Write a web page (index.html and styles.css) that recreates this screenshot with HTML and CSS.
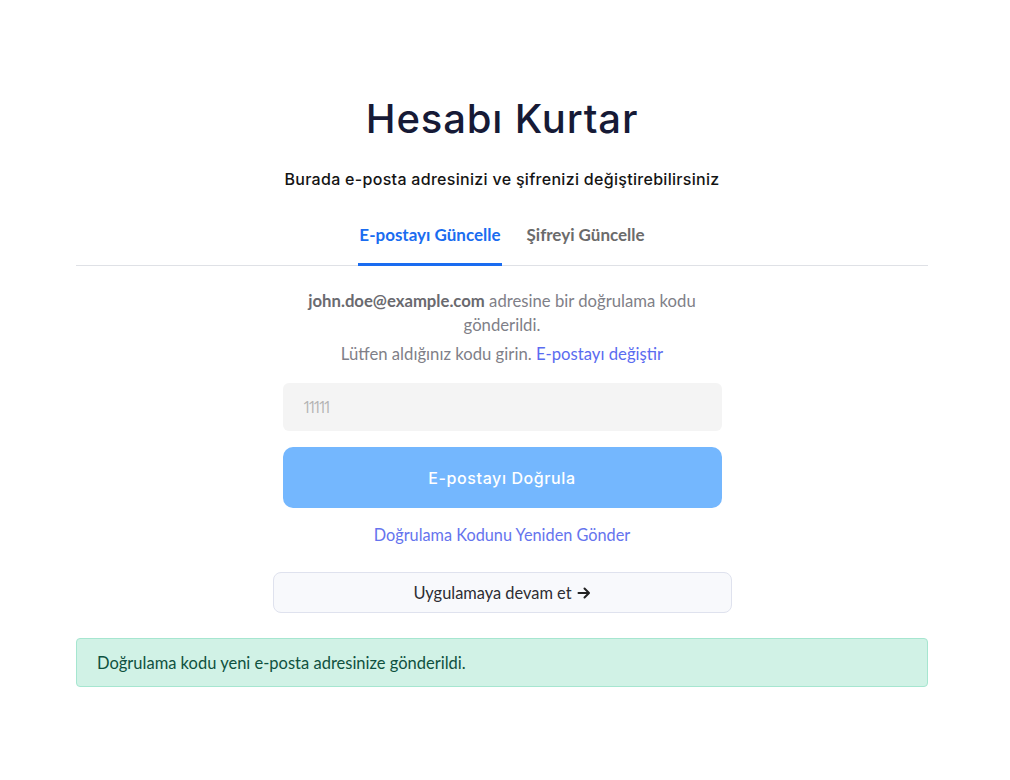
FILE: index.html
```html
<!DOCTYPE html>
<html lang="tr">
<head>
<meta charset="utf-8">
<title>Hesabı Kurtar</title>
<link rel="stylesheet" href="styles.css">
</head>
<body>
<main class="page">
  <h1 class="title">Hesabı Kurtar</h1>
  <p class="subtitle">Burada e-posta adresinizi ve şifrenizi değiştirebilirsiniz</p>
  <nav class="tabs">
    <a class="tab active">E-postayı Güncelle</a>
    <a class="tab">Şifreyi Güncelle</a>
  </nav>
  <section class="form">
    <p class="info"><strong>john.doe@example.com</strong> adresine bir doğrulama kodu gönderildi.</p>
    <p class="info second">Lütfen aldığınız kodu girin. <a class="link">E-postayı değiştir</a></p>
    <input class="code" type="text" placeholder="11111">
    <button class="verify">E-postayı Doğrula</button>
    <a class="link resend">Doğrulama Kodunu Yeniden Gönder</a>
    <button class="continue">Uygulamaya devam et <svg class="arrow" width="14" height="14" viewBox="0 0 14 14"><path d="M1.5 7h10M7.5 2.5L12 7l-4.5 4.5" fill="none" stroke="#222" stroke-width="2" stroke-linecap="round" stroke-linejoin="round"/></svg></button>
  </section>
  <div class="alert">Doğrulama kodu yeni e-posta adresinize gönderildi.</div>
</main>
</body>
</html>
```

FILE: styles.css
```css
* { box-sizing: border-box; }
html, body { margin: 0; padding: 0; background: #fff; }
body { font-family: "Lato", "Noto Sans", sans-serif; }
.page {
  width: 852px;
  margin: 0 0 0 76px;
  padding-top: 95px;
  display: flex;
  flex-direction: column;
  align-items: center;
}
.title {
  margin: 0;
  font-family: "Inter", "Open Sans", sans-serif;
  font-weight: 500;
  font-size: 40px;
  line-height: 48px;
  color: #161a36;
  letter-spacing: 0.85px;
}
.subtitle {
  margin: 24px 0 0;
  font-family: "Inter", "Open Sans", sans-serif;
  font-weight: 500;
  font-size: 16px;
  line-height: 24px;
  color: #141414;
  letter-spacing: 0.3px;
}
.tabs {
  margin-top: 24px;
  width: 100%;
  display: flex;
  justify-content: center;
  gap: 24px;
  border-bottom: 1px solid #dfe1e6;
}
.tab {
  padding: 9px 1px 17px;
  font-size: 17px;
  line-height: 22px;
  font-weight: 700;
  color: #6b6b6b;
  border-bottom: 3px solid transparent;
  margin-bottom: -1px;
}
.tab.active { color: #1a6cf0; border-bottom-color: #1a6cf0; }
.form {
  width: 439px;
  display: flex;
  flex-direction: column;
  align-items: center;
}
.info {
  margin: 23px 0 0;
  text-align: center;
  font-size: 16.7px;
  line-height: 24px;
  color: #7f7f88;
  padding: 0 10px;
}
.info strong { color: #6a6a6f; font-weight: 700; }
.info.second { margin-top: 5px; }
.link { color: #5b6cf0; text-decoration: none; }
.code {
  margin-top: 17px;
  width: 100%;
  height: 48px;
  border: none;
  border-radius: 6px;
  background: #f4f4f4;
  padding: 0 20px;
  font-family: "Open Sans", sans-serif;
  font-size: 16px;
  letter-spacing: -4px;
  color: #333;
  outline: none;
}
.code::placeholder { color: #b4b4b4; }
.verify {
  margin-top: 16px;
  width: 100%;
  height: 61px;
  border: none;
  border-radius: 10px;
  background: #74b7fe;
  color: #fff;
  font-family: "Inter", "Open Sans", sans-serif;
  font-weight: 500;
  font-size: 16px;
  letter-spacing: 0.6px;
}
.resend {
  margin-top: 15px;
  font-size: 16.3px;
  line-height: 24px;
  color: #6574ee;
}
.continue {
  margin-top: 25px;
  width: 459px;
  height: 41px;
  border: 1px solid #dfe2ee;
  border-radius: 8px;
  background: #f8f9fc;
  color: #2c2c33;
  font-family: "Lato", sans-serif;
  font-size: 16.4px;
  display: flex;
  align-items: center;
  justify-content: center;
  gap: 5px;
}
.arrow { display: block; }
.alert {
  margin-top: 25px;
  width: 100%;
  height: 49px;
  display: flex;
  align-items: center;
  padding: 0 20px;
  background: #d1f2e6;
  border: 1px solid #a6e6d0;
  border-radius: 4px;
  color: #0f5140;
  font-size: 16.5px;
}
```
